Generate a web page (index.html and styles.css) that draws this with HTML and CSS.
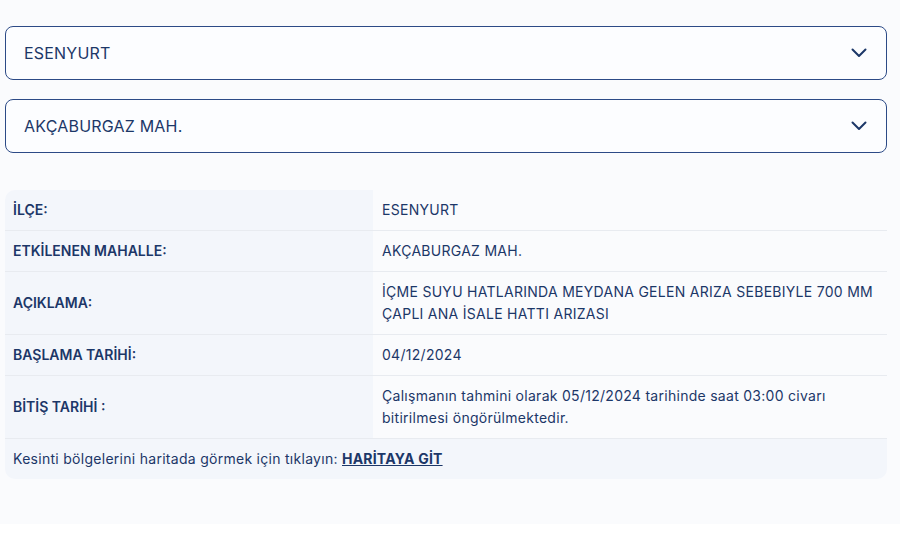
FILE: index.html
```html
<!DOCTYPE html>
<html lang="tr">
<head>
    <meta charset="UTF-8">
    <meta name="viewport" content="width=device-width, initial-scale=1.0">
    <title>Arıza Bilgisi</title>
    <link rel="stylesheet" href="styles.css">
</head>
<body>
    <div class="outage-panel">
        <div class="picker">
            <span>ESENYURT</span>
            <svg class="chevron" width="16" height="10" viewBox="0 0 16 10"><path d="M1.5 1.5 L8 8 L14.5 1.5" fill="none" stroke="#1c3768" stroke-width="2" stroke-linecap="round" stroke-linejoin="round"/></svg>
        </div>
        <div class="picker">
            <span>AKÇABURGAZ MAH.</span>
            <svg class="chevron" width="16" height="10" viewBox="0 0 16 10"><path d="M1.5 1.5 L8 8 L14.5 1.5" fill="none" stroke="#1c3768" stroke-width="2" stroke-linecap="round" stroke-linejoin="round"/></svg>
        </div>

        <table class="info-table">
            <tr>
                <th>İLÇE:</th>
                <td>ESENYURT</td>
            </tr>
            <tr>
                <th>ETKİLENEN MAHALLE:</th>
                <td>AKÇABURGAZ MAH.</td>
            </tr>
            <tr>
                <th>AÇIKLAMA:</th>
                <td>İÇME SUYU HATLARINDA MEYDANA GELEN ARIZA SEBEBIYLE 700 MM ÇAPLI ANA İSALE HATTI ARIZASI</td>
            </tr>
            <tr>
                <th>BAŞLAMA TARİHİ:</th>
                <td>04/12/2024</td>
            </tr>
            <tr>
                <th>BİTİŞ TARİHİ :</th>
                <td>Çalışmanın tahmini olarak 05/12/2024 tarihinde saat 03:00 civarı bitirilmesi öngörülmektedir.</td>
            </tr>
            <tr class="map-row">
                <td colspan="2">Kesinti bölgelerini haritada görmek için tıklayın: <a href="#">HARİTAYA GİT</a></td>
            </tr>
        </table>
    </div>
</body>
</html>
```

FILE: styles.css
```css
body {
    margin: 0;
    background: #ffffff;
    font-family: Inter, "Noto Sans", sans-serif;
    color: #1c3768;
}
.outage-panel {
    background: #fafbfd;
    padding: 26px 13px 45px 5px;
}
.picker {
    display: flex;
    align-items: center;
    justify-content: space-between;
    height: 52px;
    padding: 0 19px 0 18px;
    border: 1px solid #2c4a86;
    border-radius: 8px;
    background: #fcfdff;
    font-size: 16px;
    letter-spacing: 0.2px;
    margin-bottom: 19px;
}
.picker:last-of-type {
    margin-bottom: 37px;
}
.chevron {
    display: block;
}
.info-table {
    width: 100%;
    border-collapse: separate;
    border-spacing: 0;
    border-radius: 10px;
    overflow: hidden;
    font-size: 14px;
    line-height: 22px;
    letter-spacing: 0.28px;
}
.info-table th,
.info-table td {
    text-align: left;
    vertical-align: middle;
    padding: 9px;
    border-bottom: 1px solid #e8ebf0;
}
.info-table th {
    width: 351px;
    padding-left: 8px;
    background: #f3f6fb;
    font-weight: 600;
    letter-spacing: 0;
}
.info-table td {
    background: #fafbfd;
    font-weight: 400;
}
.map-row td {
    background: #f3f6fb;
    border-bottom: none;
    padding: 9px 8px;
}
.map-row a {
    color: #1c3768;
    font-weight: 700;
    text-decoration: underline;
    letter-spacing: 0.2px;
}
```
